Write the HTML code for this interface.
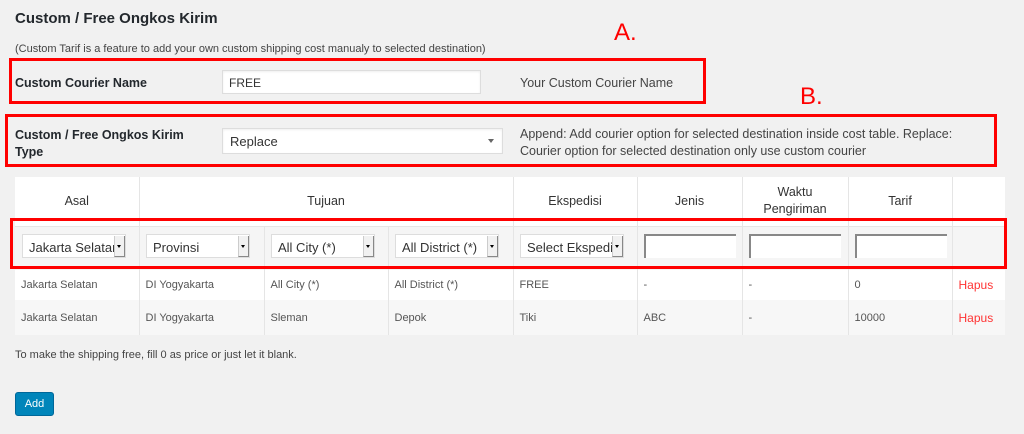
<!DOCTYPE html>
<html><head><style>
*{box-sizing:border-box;margin:0;padding:0}
body{width:1024px;height:434px;background:#f1f1f1;font-family:"Liberation Sans",sans-serif;color:#333;position:relative;overflow:hidden}
.a{position:absolute}
.rb{position:absolute;border:3px solid #f00}
.lt{position:absolute;color:#f00;font-size:24px}
.inp{position:absolute;background:#fff;border:1px solid #ddd;box-shadow:inset 0 1px 2px rgba(0,0,0,.07)}
.sel{position:absolute;background:#fff;border:1px solid #ddd;font-size:13px;padding:5px 0 0 6px;color:#333;white-space:nowrap;overflow:hidden}
.sel i{position:absolute;right:0;top:1px;width:11px;height:21px;background:#f1f1f1;border-left:1px solid #ccc;border-right:1px solid #888;border-bottom:1px solid #888}
.sel i:after{content:"";position:absolute;left:2px;top:9px;border:2px solid transparent;border-top:3px solid #000}
.txt{position:absolute;background:#fff;border-top:2px solid #888;border-left:2px solid #888;height:24px}
table{position:absolute;left:15px;top:177px;border-collapse:collapse;font-size:11px;color:#555}
td{border-left:1px solid #e5e5e5;padding:0 6px;}
tr.h td{height:49px;background:#fff;text-align:center;font-size:12.5px;color:#333}
tr.f td{height:44px;background:#f5f5f5;border-top:1px solid #e5e5e5}
tr.d1 td{height:30px;background:#fff}
tr.d2 td{height:35px;background:#f7f7f7}
.hp{color:#f33;font-size:12px}
</style></head><body>
<div class="a" style="left:15px;top:10px;font-size:15px;font-weight:bold;color:#23282d">Custom / Free Ongkos Kirim</div>
<div class="a" style="left:15px;top:43px;font-size:11px;color:#444">(Custom Tarif is a feature to add your own custom shipping cost manualy to selected destination)</div>
<div class="lt" style="left:614px;top:19px">A.</div>
<div class="lt" style="left:800px;top:83px">B.</div>
<div class="lt" style="left:972px;top:185px">C.</div>
<div class="a" style="left:15px;top:76px;font-size:12.5px;font-weight:bold;color:#23282d">Custom Courier Name</div>
<div class="inp" style="left:222px;top:70px;width:259px;height:24px;font-size:12px;padding:5px 6px">FREE</div>
<div class="a" style="left:520px;top:76px;font-size:12.5px;color:#444">Your Custom Courier Name</div>
<div class="rb" style="left:9px;top:58px;width:697px;height:46px"></div>
<div class="a" style="left:15px;top:127px;font-size:12.5px;font-weight:bold;color:#23282d;line-height:17px">Custom / Free Ongkos Kirim<br>Type</div>
<div class="inp" style="left:222px;top:128px;width:281px;height:26px;font-size:13px;padding:5px 7px">Replace<span style="position:absolute;right:8px;top:10px;border:3px solid transparent;border-top:4px solid #666"></span></div>
<div class="a" style="left:520px;top:126px;font-size:12.5px;color:#444;line-height:17px;width:470px">Append: Add courier option for selected destination inside cost table. Replace: Courier option for selected destination only use custom courier</div>
<div class="rb" style="left:5px;top:114px;width:992px;height:53px"></div>
<table>
<tr class="h"><td style="width:124px;border-left:0">Asal</td><td colspan="3" style="width:374px">Tujuan</td><td style="width:124px">Ekspedisi</td><td style="width:105px">Jenis</td><td style="width:106px;line-height:17px">Waktu<br>Pengiriman</td><td style="width:104px">Tarif</td><td style="width:53px"></td></tr>
<tr class="f"><td style="border-left:0"></td><td style="width:125px"></td><td style="width:124px"></td><td style="width:125px"></td><td></td><td></td><td></td><td></td><td></td></tr>
<tr class="d1"><td style="border-left:0">Jakarta Selatan</td><td>DI Yogyakarta</td><td>All City (*)</td><td>All District (*)</td><td>FREE</td><td>-</td><td>-</td><td>0</td><td class="hp">Hapus</td></tr>
<tr class="d2"><td style="border-left:0">Jakarta Selatan</td><td>DI Yogyakarta</td><td>Sleman</td><td>Depok</td><td>Tiki</td><td>ABC</td><td>-</td><td>10000</td><td class="hp">Hapus</td></tr>
</table>
<div class="sel" style="left:22px;top:234px;width:104px;height:24px">Jakarta Selatan<i></i></div>
<div class="sel" style="left:146px;top:234px;width:104px;height:24px">Provinsi<i></i></div>
<div class="sel" style="left:271px;top:234px;width:104px;height:24px">All City (*)<i></i></div>
<div class="sel" style="left:395px;top:234px;width:104px;height:24px">All District (*)<i></i></div>
<div class="sel" style="left:520px;top:234px;width:104px;height:24px">Select Ekspedisi<i></i></div>
<div class="txt" style="left:644px;top:234px;width:92px"></div>
<div class="txt" style="left:749px;top:234px;width:92px"></div>
<div class="txt" style="left:855px;top:234px;width:92px"></div>
<div class="rb" style="left:10px;top:218px;width:997px;height:51px"></div>
<div class="a" style="left:15px;top:349px;font-size:11px;color:#444">To make the shipping free, fill 0 as price or just let it blank.</div>
<div class="a" style="left:15px;top:392px;width:39px;height:24px;background:#0085ba;border:1px solid #006799;border-radius:3px;color:#fff;font-size:11px;text-align:center;line-height:22px">Add</div>
</body></html>
